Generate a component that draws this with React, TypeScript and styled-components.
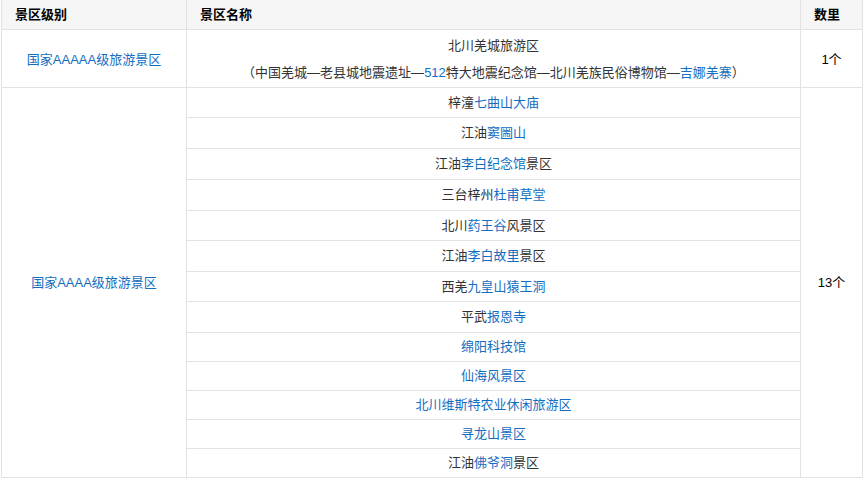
import React from "react";
import styled, { createGlobalStyle } from "styled-components";

const GlobalStyle = createGlobalStyle`
  html, body { margin: 0; padding: 0; background: #ffffff; }
  body {
    font-family: "Liberation Sans", Arial, "Noto Sans CJK SC", sans-serif;
    color: #333333;
  }
`;

const Wrap = styled.div`
  padding-left: 1px;
`;

const Table = styled.table`
  border-collapse: collapse;
  table-layout: fixed;
  width: 861px;
  font-size: 13px;
`;

const HeadCell = styled.th<{ $w: number }>`
  width: ${(p) => p.$w}px;
  height: 29px;
  padding: 0 13px;
  background: #f6f6f6;
  border: 1px solid #e2e2e2;
  border-top: none;
  text-align: left;
  font-weight: bold;
  font-size: 13px;
  color: #000000;
  line-height: 29px;
  box-sizing: border-box;
`;

const Cell = styled.td<{ $h?: number }>`
  border: 1px solid #e2e2e2;
  text-align: center;
  vertical-align: middle;
  padding: 0;
  height: ${(p) => (p.$h ? `${p.$h}px` : "auto")};
  line-height: ${(p) => (p.$h ? `${p.$h}px` : "27px")};
  color: #333333;
  white-space: nowrap;
`;

const TwoLineCell = styled(Cell)`
  padding: 2px 0 1px;
  line-height: 27px;
`;

const Line = styled.div`
  line-height: 27px;
`;

const Link = styled.span`
  color: #136ec2;
`;

const CountText = styled.span`
  color: #000000;
`;

type Part = string | { l: string };

const rows: { parts: Part[]; h: number }[] = [
  { parts: ["梓潼", { l: "七曲山大庙" }], h: 29 },
  { parts: ["江油", { l: "窦圌山" }], h: 30 },
  { parts: ["江油", { l: "李白纪念馆" }, "景区"], h: 30 },
  { parts: ["三台梓州", { l: "杜甫草堂" }], h: 30 },
  { parts: ["北川", { l: "药王谷" }, "风景区"], h: 29 },
  { parts: ["江油", { l: "李白故里" }, "景区"], h: 30 },
  { parts: ["西羌", { l: "九皇山猿王洞" }], h: 29 },
  { parts: ["平武", { l: "报恩寺" }], h: 30 },
  { parts: [{ l: "绵阳科技馆" }], h: 28 },
  { parts: [{ l: "仙海风景区" }], h: 28 },
  { parts: [{ l: "北川维斯特农业休闲旅游区" }], h: 28 },
  { parts: [{ l: "寻龙山景区" }], h: 28 },
  { parts: ["江油", { l: "佛爷洞" }, "景区"], h: 28 },
];

const renderParts = (parts: Part[]) =>
  parts.map((p, i) =>
    typeof p === "string" ? (
      <React.Fragment key={i}>{p}</React.Fragment>
    ) : (
      <Link key={i}>{p.l}</Link>
    )
  );

export default function App() {
  return (
    <>
      <GlobalStyle />
      <Wrap>
        <Table>
          <thead>
            <tr>
              <HeadCell $w={185}>景区级别</HeadCell>
              <HeadCell $w={614}>景区名称</HeadCell>
              <HeadCell $w={62}>数里</HeadCell>
            </tr>
          </thead>
          <tbody>
            <tr>
              <TwoLineCell>
                <Link>国家AAAAA级旅游景区</Link>
              </TwoLineCell>
              <TwoLineCell>
                <Line>北川羌城旅游区</Line>
                <Line>
                  （中国羌城—老县城地震遗址—<Link>512</Link>特大地震纪念馆—北川羌族民俗博物馆—
                  <Link>吉娜羌寨</Link>）
                </Line>
              </TwoLineCell>
              <TwoLineCell>
                <CountText>1个</CountText>
              </TwoLineCell>
            </tr>
            {rows.map((r, i) => (
              <tr key={i}>
                {i === 0 && (
                  <Cell rowSpan={rows.length}>
                    <Link>国家AAAA级旅游景区</Link>
                  </Cell>
                )}
                <Cell $h={r.h}>{renderParts(r.parts)}</Cell>
                {i === 0 && (
                  <Cell rowSpan={rows.length}>
                    <CountText>13个</CountText>
                  </Cell>
                )}
              </tr>
            ))}
          </tbody>
        </Table>
      </Wrap>
    </>
  );
}
